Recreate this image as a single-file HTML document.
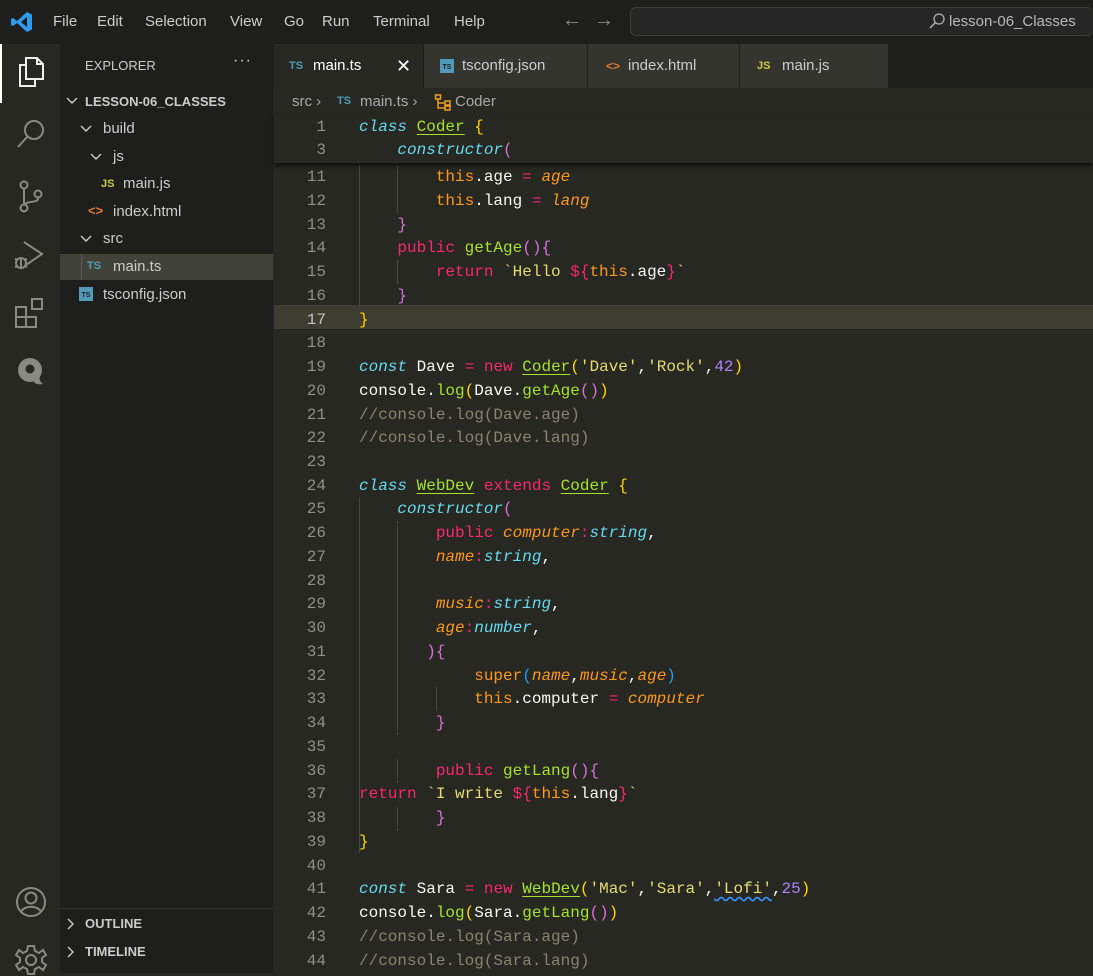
<!DOCTYPE html>
<html><head><meta charset="utf-8">
<style>
*{margin:0;padding:0;box-sizing:border-box}
body{width:1093px;height:973px;overflow:hidden;background:#272822;font-family:"Liberation Sans",sans-serif;position:relative}
.abs{position:absolute}
#title{left:0;top:0;width:1093px;height:44px;background:#1e1f1c}
.menu{top:13px;font-size:15px;color:#cccccc}
#act{left:0;top:44px;width:60px;height:929px;background:#272822}
#side{left:60px;top:44px;width:213px;height:929px;background:#1e1f1c}
#tabs{left:273px;top:44px;width:820px;height:44px;background:#1e1f1c}
.tab{top:44px;height:44px;background:#34352f;color:#cccccc;font-size:15px;line-height:44px;border-right:1px solid #1e1f1c}
.code{font-family:"Liberation Mono",monospace;font-size:16px;white-space:pre;color:#f8f8f2}
.ln{position:absolute;left:274px;width:52px;text-align:right;height:24px;line-height:24px;color:#90908a;font-family:"Liberation Mono",monospace;font-size:16px}
.cl{position:absolute;left:359px;height:24px;line-height:24px}
.k{color:#f92672}.s{color:#66d9ef;font-style:italic}.c{color:#a6e22e;text-decoration:underline;text-underline-offset:3px}
.g{color:#a6e22e}.st{color:#e6db74}.n{color:#ae81ff}.p{color:#fd971f;font-style:italic}.o{color:#fd971f}
.cm{color:#88846f}.b1{color:#ffd700}.b2{color:#da70d6}.b3{color:#179fff}
.tree{font-size:15px;color:#cccccc;position:absolute;height:24px;line-height:24px}
.guide{position:absolute;width:1px;background:#464741}
.chev{position:absolute}
</style></head><body>
<div id="title" class="abs"></div>
<svg class="abs" style="left:10px;top:10px" width="24" height="24" viewBox="0 0 24 24"><path d="M17 2 L22 4.5 V19.5 L17 22 L7 13 L3 16 L1 15 V9 L3 8 L7 11 Z M17 7 L11 12 L17 17 Z" fill="#2f9bef"/></svg>
<div class="abs menu" style="left:53px">File</div>
<div class="abs menu" style="left:97px">Edit</div>
<div class="abs menu" style="left:145px">Selection</div>
<div class="abs menu" style="left:230px">View</div>
<div class="abs menu" style="left:284px">Go</div>
<div class="abs menu" style="left:322px">Run</div>
<div class="abs menu" style="left:373px">Terminal</div>
<div class="abs menu" style="left:454px">Help</div>
<div class="abs" style="left:562px;top:9px;font-size:20px;color:#8b8b8b">&#8592;</div>
<div class="abs" style="left:594px;top:9px;font-size:20px;color:#8b8b8b">&#8594;</div>
<div class="abs" style="left:630px;top:7px;width:463px;height:29px;border:1px solid #3c3c3c;border-radius:6px;background:#262626;border-right:none"></div>
<svg class="abs" style="left:928px;top:12px" width="18" height="18" viewBox="0 0 18 18"><circle cx="11" cy="7" r="5" fill="none" stroke="#b0b0b0" stroke-width="1.3"/><path d="M7.5 10.5 L2 16" stroke="#b0b0b0" stroke-width="1.5"/></svg>
<div class="abs" style="left:949px;top:13px;font-size:15px;color:#b8b8b8">lesson-06_Classes</div>

<div id="act" class="abs"></div>
<div class="abs" style="left:0;top:44px;width:2px;height:59px;background:#ffffff"></div>
<svg class="abs" style="left:16px;top:56px" width="30" height="32" viewBox="0 0 30 32" fill="none" stroke="#f0f0f0" stroke-width="2"><path d="M10 2 H21 L27 8 V23 H10 Z"/><path d="M21 2 V8 H27"/><path d="M10 9 H4 V30 H19 V23"/></svg>
<svg class="abs" style="left:16px;top:118px" width="30" height="32" viewBox="0 0 30 32" fill="none" stroke="#8a8a85" stroke-width="2"><circle cx="18" cy="12" r="9"/><path d="M11.5 18.5 L2 29"/></svg>
<svg class="abs" style="left:16px;top:180px" width="30" height="34" viewBox="0 0 30 34" fill="none" stroke="#8a8a85" stroke-width="2"><circle cx="8" cy="5" r="3.5"/><circle cx="8" cy="28" r="3.5"/><circle cx="22" cy="14" r="3.5"/><path d="M8 9 V24 M22 18 C22 24 10 20 9 25"/></svg>
<svg class="abs" style="left:12px;top:238px" width="34" height="34" viewBox="0 0 34 34" fill="none" stroke="#8a8a85" stroke-width="2"><path d="M12 4 L30 16 L14 27"/><circle cx="9" cy="25" r="5"/><path d="M3 21 L6 22 M3 29 L6 28 M15 21 L12 22 M15 29 L12 28 M9 20 V30"/></svg>
<svg class="abs" style="left:14px;top:296px" width="34" height="34" viewBox="0 0 34 34" fill="none" stroke="#8a8a85" stroke-width="2"><rect x="2" y="11" width="10" height="10"/><rect x="2" y="21" width="10" height="10"/><rect x="12" y="21" width="10" height="10"/><rect x="18" y="3" width="10" height="10"/></svg>
<svg class="abs" style="left:16px;top:356px" width="30" height="32" viewBox="0 0 30 32"><circle cx="14" cy="14" r="12" fill="#8a8a85"/><circle cx="14" cy="13" r="4.5" fill="#272822"/><path d="M16 22 Q18 30 27 28 Q22 24 24 20 Z" fill="#8a8a85"/></svg>
<svg class="abs" style="left:15px;top:886px" width="32" height="32" viewBox="0 0 32 32" fill="none" stroke="#8a8a85" stroke-width="2"><circle cx="16" cy="16" r="14"/><circle cx="16" cy="12" r="5.5"/><path d="M6 26 C9 19 23 19 26 26"/></svg>
<svg class="abs" style="left:15px;top:944px" width="32" height="32" viewBox="0 0 32 32" fill="none" stroke="#8a8a85" stroke-width="2"><circle cx="16" cy="16" r="5"/><path d="M13 2 H19 L20 7 L24 9 L28 6 L31 11 L27 14 V18 L31 21 L28 26 L24 23 L20 25 L19 30 H13 L12 25 L8 23 L4 26 L1 21 L5 18 V14 L1 11 L4 6 L8 9 L12 7 Z"/></svg>

<div id="side" class="abs"></div>
<div class="abs" style="left:85px;top:58px;font-size:13px;color:#cccccc">EXPLORER</div>
<div class="abs" style="left:233px;top:52px;font-size:16px;color:#cccccc;letter-spacing:1px">···</div>
<svg class="chev" style="left:65px;top:96px" width="14" height="10" viewBox="0 0 14 10"><path d="M2 2 L7 7 L12 2" fill="none" stroke="#cccccc" stroke-width="1.4"/></svg>
<div class="tree" style="left:85px;top:90px;font-size:13px;font-weight:bold">LESSON-06_CLASSES</div>
<svg class="chev" style="left:79px;top:124px" width="14" height="10" viewBox="0 0 14 10"><path d="M2 2 L7 7 L12 2" fill="none" stroke="#cccccc" stroke-width="1.4"/></svg>
<div class="tree" style="left:103px;top:117px">build</div>
<svg class="chev" style="left:89px;top:152px" width="14" height="10" viewBox="0 0 14 10"><path d="M2 2 L7 7 L12 2" fill="none" stroke="#cccccc" stroke-width="1.4"/></svg>
<div class="tree" style="left:113px;top:145px">js</div>
<div class="tree" style="left:101px;top:172px;font-size:11px;font-weight:bold;color:#cbcb41">JS</div>
<div class="tree" style="left:123px;top:172px">main.js</div>
<div class="tree" style="left:88px;top:199px;font-size:13px;font-weight:bold;color:#e37933">&lt;&gt;</div>
<div class="tree" style="left:113px;top:200px">index.html</div>
<svg class="chev" style="left:79px;top:234px" width="14" height="10" viewBox="0 0 14 10"><path d="M2 2 L7 7 L12 2" fill="none" stroke="#cccccc" stroke-width="1.4"/></svg>
<div class="tree" style="left:103px;top:227px">src</div>
<div class="abs" style="left:60px;top:254px;width:213px;height:26px;background:#414339"></div>
<div class="abs" style="left:81px;top:254px;width:1px;height:26px;background:#585858"></div>
<div class="tree" style="left:87px;top:254px;font-size:11px;font-weight:bold;color:#519aba">TS</div>
<div class="tree" style="left:113px;top:255px">main.ts</div>
<div class="abs" style="left:79px;top:287px;width:14px;height:14px;background:#519aba;color:#1e1f1c;font-size:7px;font-weight:bold;line-height:17px;text-align:center">TS</div>
<div class="tree" style="left:103px;top:283px">tsconfig.json</div>
<div class="abs" style="left:60px;top:908px;width:213px;height:1px;background:#333"></div>
<svg class="chev" style="left:66px;top:917px" width="10" height="14" viewBox="0 0 10 14"><path d="M2 2 L7 7 L2 12" fill="none" stroke="#cccccc" stroke-width="1.4"/></svg>
<div class="tree" style="left:85px;top:912px;font-size:13px;font-weight:bold">OUTLINE</div>
<svg class="chev" style="left:66px;top:945px" width="10" height="14" viewBox="0 0 10 14"><path d="M2 2 L7 7 L2 12" fill="none" stroke="#cccccc" stroke-width="1.4"/></svg>
<div class="tree" style="left:85px;top:940px;font-size:13px;font-weight:bold">TIMELINE</div>

<div id="tabs" class="abs"></div>
<div class="abs tab" style="left:274px;width:150px;background:#272822">
 <span style="position:absolute;left:15px;font-size:11px;font-weight:bold;color:#519aba">TS</span>
 <span style="position:absolute;left:39px;color:#ffffff">main.ts</span>
 <span style="position:absolute;left:122px;color:#ffffff;font-size:18px">&#10005;</span></div>
<div class="abs tab" style="left:424px;width:164px">
 <span style="position:absolute;left:16px;top:15px;width:14px;height:14px;background:#519aba;color:#1e1f1c;font-size:7px;font-weight:bold;line-height:17px;text-align:center">TS</span>
 <span style="position:absolute;left:38px">tsconfig.json</span></div>
<div class="abs tab" style="left:588px;width:152px">
 <span style="position:absolute;left:18px;font-size:12px;font-weight:bold;color:#e37933">&lt;&gt;</span>
 <span style="position:absolute;left:40px">index.html</span></div>
<div class="abs tab" style="left:740px;width:149px">
 <span style="position:absolute;left:17px;font-size:11px;font-weight:bold;color:#cbcb41">JS</span>
 <span style="position:absolute;left:42px">main.js</span></div>

<div class="abs" style="left:292px;top:93px;font-size:15px;color:#a9a9a9">src &#8250;</div>
<div class="abs" style="left:337px;top:95px;font-size:11px;font-weight:bold;color:#519aba">TS</div>
<div class="abs" style="left:360px;top:93px;font-size:15px;color:#a9a9a9">main.ts &#8250;</div>
<svg class="abs" style="left:434px;top:93px" width="18" height="18" viewBox="0 0 18 18" fill="none" stroke="#ee9d28" stroke-width="1.5"><rect x="1.5" y="2" width="5" height="4"/><rect x="11" y="8" width="5" height="4"/><rect x="11" y="13" width="5" height="4"/><path d="M4 6 V15 H11 M4 10 H11"/></svg>
<div class="abs" style="left:455px;top:93px;font-size:15px;color:#a9a9a9">Coder</div>

<div class="abs" style="left:274px;top:305px;width:819px;height:24px;background:#3e3d32"></div>
<div class="guide" style="left:359px;top:165px;height:142px"></div>
<div class="guide" style="left:397px;top:165px;height:48px"></div>
<div class="guide" style="left:397px;top:260px;height:24px"></div>
<div class="guide" style="left:359px;top:497px;height:356px"></div>
<div class="guide" style="left:397px;top:521px;height:214px"></div>
<div class="guide" style="left:397px;top:759px;height:24px"></div>
<div class="guide" style="left:397px;top:807px;height:24px"></div>
<div class="guide" style="left:436px;top:687px;height:24px"></div>

<div id="code">
<div class="ln" style="top:165px">11</div><div class="cl code" style="top:165px">        <span class="o">this</span>.age <span class="k">=</span> <span class="p">age</span></div>
<div class="ln" style="top:189px">12</div><div class="cl code" style="top:189px">        <span class="o">this</span>.lang <span class="k">=</span> <span class="p">lang</span></div>
<div class="ln" style="top:213px">13</div><div class="cl code" style="top:213px">    <span class="b2">}</span></div>
<div class="ln" style="top:236px">14</div><div class="cl code" style="top:236px">    <span class="k">public</span> <span class="g">getAge</span><span class="b2">(){</span></div>
<div class="ln" style="top:260px">15</div><div class="cl code" style="top:260px">        <span class="k">return</span> <span class="st">`Hello </span><span class="k">${</span><span class="o">this</span>.age<span class="k">}</span><span class="st">`</span></div>
<div class="ln" style="top:284px">16</div><div class="cl code" style="top:284px">    <span class="b2">}</span></div>
<div class="ln" style="top:308px;color:#c2c2bf">17</div><div class="cl code" style="top:308px"><span class="b1">}</span></div>
<div class="ln" style="top:331px">18</div>
<div class="ln" style="top:355px">19</div><div class="cl code" style="top:355px"><span class="s">const</span> Dave <span class="k">=</span> <span class="k">new</span> <span class="c">Coder</span><span class="b1">(</span><span class="st">'Dave'</span>,<span class="st">'Rock'</span>,<span class="n">42</span><span class="b1">)</span></div>
<div class="ln" style="top:379px">20</div><div class="cl code" style="top:379px">console.<span class="g">log</span><span class="b1">(</span>Dave.<span class="g">getAge</span><span class="b2">()</span><span class="b1">)</span></div>
<div class="ln" style="top:403px">21</div><div class="cl code cm" style="top:403px">//console.log(Dave.age)</div>
<div class="ln" style="top:426px">22</div><div class="cl code cm" style="top:426px">//console.log(Dave.lang)</div>
<div class="ln" style="top:450px">23</div>
<div class="ln" style="top:474px">24</div><div class="cl code" style="top:474px"><span class="s">class</span> <span class="c">WebDev</span> <span class="k">extends</span> <span class="c">Coder</span> <span class="b1">{</span></div>
<div class="ln" style="top:497px">25</div><div class="cl code" style="top:497px">    <span class="s">constructor</span><span class="b2">(</span></div>
<div class="ln" style="top:521px">26</div><div class="cl code" style="top:521px">        <span class="k">public</span> <span class="p">computer</span><span class="k">:</span><span class="s">string</span>,</div>
<div class="ln" style="top:545px">27</div><div class="cl code" style="top:545px">        <span class="p">name</span><span class="k">:</span><span class="s">string</span>,</div>
<div class="ln" style="top:569px">28</div>
<div class="ln" style="top:592px">29</div><div class="cl code" style="top:592px">        <span class="p">music</span><span class="k">:</span><span class="s">string</span>,</div>
<div class="ln" style="top:616px">30</div><div class="cl code" style="top:616px">        <span class="p">age</span><span class="k">:</span><span class="s">number</span>,</div>
<div class="ln" style="top:640px">31</div><div class="cl code" style="top:640px">       <span class="b2">){</span></div>
<div class="ln" style="top:664px">32</div><div class="cl code" style="top:664px">            <span class="o">super</span><span class="b3">(</span><span class="p">name</span>,<span class="p">music</span>,<span class="p">age</span><span class="b3">)</span></div>
<div class="ln" style="top:687px">33</div><div class="cl code" style="top:687px">            <span class="o">this</span>.computer <span class="k">=</span> <span class="p">computer</span></div>
<div class="ln" style="top:711px">34</div><div class="cl code" style="top:711px">        <span class="b2">}</span></div>
<div class="ln" style="top:735px">35</div>
<div class="ln" style="top:759px">36</div><div class="cl code" style="top:759px">        <span class="k">public</span> <span class="g">getLang</span><span class="b2">(){</span></div>
<div class="ln" style="top:782px">37</div><div class="cl code" style="top:782px"><span class="k">return</span> <span class="st">`I write </span><span class="k">${</span><span class="o">this</span>.lang<span class="k">}</span><span class="st">`</span></div>
<div class="ln" style="top:806px">38</div><div class="cl code" style="top:806px">        <span class="b2">}</span></div>
<div class="ln" style="top:830px">39</div><div class="cl code" style="top:830px"><span class="b1">}</span></div>
<div class="ln" style="top:854px">40</div>
<div class="ln" style="top:877px">41</div><div class="cl code" style="top:877px"><span class="s">const</span> Sara <span class="k">=</span> <span class="k">new</span> <span class="c">WebDev</span><span class="b1">(</span><span class="st">'Mac'</span>,<span class="st">'Sara'</span>,<span class="st" style="text-decoration:underline wavy #3794ff;text-underline-offset:3px">'Lofi'</span>,<span class="n">25</span><span class="b1">)</span></div>
<div class="ln" style="top:901px">42</div><div class="cl code" style="top:901px">console.<span class="g">log</span><span class="b1">(</span>Sara.<span class="g">getLang</span><span class="b2">()</span><span class="b1">)</span></div>
<div class="ln" style="top:925px">43</div><div class="cl code cm" style="top:925px">//console.log(Sara.age)</div>
<div class="ln" style="top:949px">44</div><div class="cl code cm" style="top:949px">//console.log(Sara.lang)</div>
</div>

<div class="abs" style="left:274px;top:114px;width:819px;height:49px;background:#272822;box-shadow:0 3px 4px rgba(0,0,0,0.6)"></div>
<div class="ln" style="top:115px">1</div><div class="cl code" style="top:115px"><span class="s">class</span> <span class="c">Coder</span> <span class="b1">{</span></div>
<div class="ln" style="top:138px">3</div><div class="cl code" style="top:138px">    <span class="s">constructor</span><span class="b2">(</span></div>
</body></html>
